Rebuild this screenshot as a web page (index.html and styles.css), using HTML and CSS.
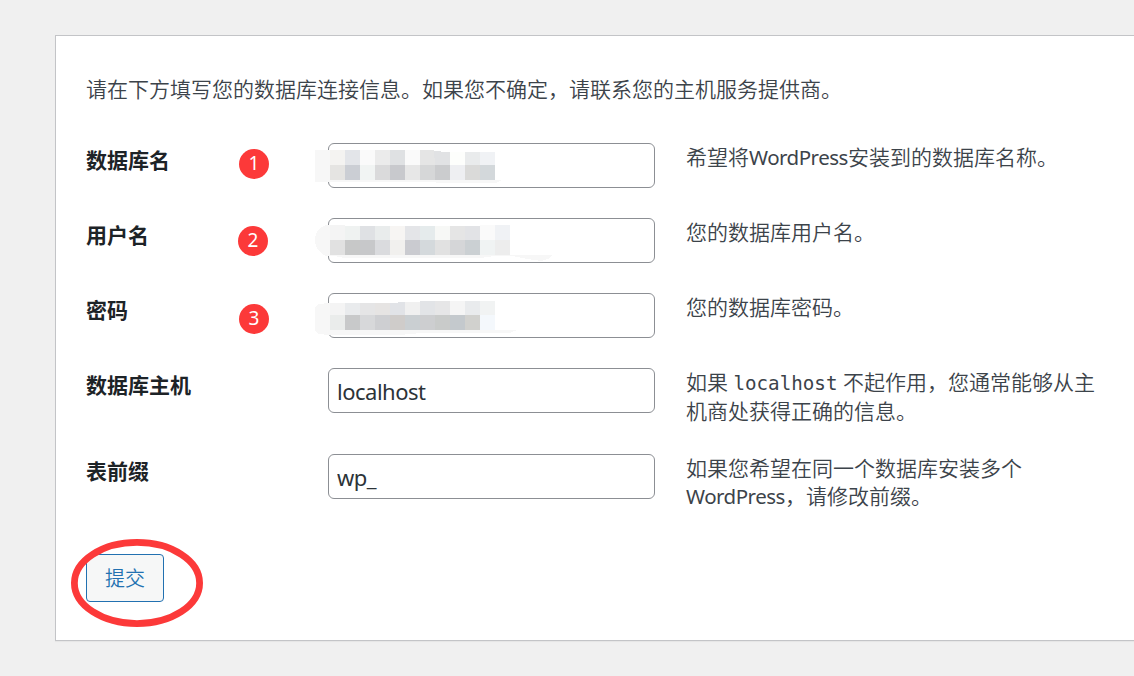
FILE: index.html
```html
<!DOCTYPE html>
<html lang="zh-CN">
<head>
<meta charset="utf-8">
<title>WordPress</title>
<link rel="stylesheet" href="styles.css">
</head>
<body>
<main class="card">
  <p class="intro">请在下方填写您的数据库连接信息。如果您不确定，请联系您的主机服务提供商。</p>
  <form class="form">
    <div class="row">
      <label class="label" for="dbname">数据库名</label>
      <span class="badge badge-1">1</span>
      <div class="field">
        <input class="input" id="dbname" type="text">
        <svg class="mosaic" width="240" height="36" viewBox="0 0 240 36" shape-rendering="crispEdges">
          <path fill="#f7f7f7" d="M0 0H15V30H187L181 33H125L116 32H0Z"/>
          <path fill="#f4f3f1" d="M15 0h15v15h-15z"/><path fill="#e3e5e9" d="M30 0h15v15h-15z"/><path fill="#fafafa" d="M45 0h15v15h-15z"/><path fill="#ebebeb" d="M60 0h15v15h-15z"/><path fill="#dfe1e3" d="M75 0h15v15h-15z"/><path fill="#fafafa" d="M90 0h15v15h-15z"/><path fill="#e5e5e5" d="M105 0h14v1h1v14h-15z"/><path fill="#e1e2e4" d="M119 1h7v1h9v13h-15z"/><path fill="#fdfefc" d="M135 2h15v13h-15z"/><path fill="#e9ebec" d="M150 2h15v13h-15z"/><path fill="#f0f2f5" d="M165 2h14l1 1v12h-15z"/>
          <path fill="#e5e4e2" d="M15 15h15v15h-15z"/><path fill="#cbced4" d="M30 15h15v15h-15z"/><path fill="#f1f4f3" d="M45 15h15v15h-15z"/><path fill="#dadadb" d="M60 15h15v15h-15z"/><path fill="#c8c9cd" d="M75 15h15v15h-15z"/><path fill="#e7e7e7" d="M90 15h15v15h-15z"/><path fill="#d6d7d8" d="M105 15h15v15h-15z"/><path fill="#cbccce" d="M120 15h15v15h-15z"/><path fill="#eeeff2" d="M135 15h15v15h-15z"/><path fill="#dadad9" d="M150 15h15v15h-15z"/><path fill="#d3d8db" d="M165 15h15v15h-15z"/>
        </svg>
      </div>
      <p class="desc">希望将<span class="latin">WordPress</span>安装到的数据库名称。</p>
    </div>
    <div class="row">
      <label class="label" for="uname">用户名</label>
      <span class="badge badge-2">2</span>
      <div class="field">
        <input class="input" id="uname" type="text">
        <svg class="mosaic" width="240" height="36" viewBox="0 0 240 36" shape-rendering="crispEdges">
          <path fill="#f7f7f7" d="M11 0H30V30H238L233 34L226 36L212 34L198 31H180L165 33H29L20 31H11Q0 26 0 15T11 0Z"/>
          <path fill="#f4f4f4" d="M15 0h15v15h-15z"/><path fill="#eff2f1" d="M30 1h15v14h-15z"/><path fill="#dfe1e4" d="M45 1h15v14h-15z"/><path fill="#e9ecec" d="M60 1h15v14h-15z"/><path fill="#f7f5f3" d="M75 1h15v14h-15z"/><path fill="#e4e5e8" d="M90 1h15v14h-15z"/><path fill="#e5ebec" d="M105 1h15v14h-15z"/><path fill="#f7f8f6" d="M120 1h15v14h-15z"/><path fill="#e5e5e5" d="M135 1h15v14h-15z"/><path fill="#e2e3e6" d="M150 1h15v14h-15z"/><path fill="#fafafa" d="M165 0h15v15h-15z"/><path fill="#f0f2f5" d="M180 0h15v15h-15z"/>
          <path fill="#e1e1e1" d="M15 15h15v15h-15z"/><path fill="#c7c8c8" d="M30 15h15v15h-15z"/><path fill="#c7c8ca" d="M45 15h15v15h-15z"/><path fill="#dadbde" d="M60 15h15v15h-15z"/><path fill="#f1f0ee" d="M75 15h15v15h-15z"/><path fill="#cacbd0" d="M90 15h15v15h-15z"/><path fill="#d4d9dc" d="M105 15h15v15h-15z"/><path fill="#e1e1e1" d="M120 15h15v15h-15z"/><path fill="#d5d6d8" d="M135 15h15v15h-15z"/><path fill="#cbd0d3" d="M150 15h15v15h-15z"/><path fill="#f0f3f3" d="M165 15h15v15h-15z"/><path fill="#ededed" d="M180 15h15v15h-15z"/>
        </svg>
      </div>
      <p class="desc">您的数据库用户名。</p>
    </div>
    <div class="row">
      <label class="label" for="pwd">密码</label>
      <span class="badge badge-3">3</span>
      <div class="field">
        <input class="input" id="pwd" type="text">
        <svg class="mosaic" width="240" height="36" viewBox="0 0 240 36" shape-rendering="crispEdges">
          <path fill="#f7f7f7" d="M3 4L15 3V30H202L195 33H106L84 35H15L3 34L0 31V7Z"/>
          <path fill="#f4f4f4" d="M15 3h15v12h-15z"/><path fill="#e9ebed" d="M30 3h15v12h-15z"/><path fill="#e5e5e6" d="M45 3h15v12h-15z"/><path fill="#e6e4e3" d="M60 3h15v12h-15z"/><path fill="#e1e3e7" d="M75 3h8v-1h7v13h-15z"/><path fill="#f0f0f0" d="M90 2h15v13h-15z"/><path fill="#e2e4e7" d="M105 1h15v14h-15z"/><path fill="#e6e6e7" d="M120 1h15v14h-15z"/><path fill="#f5f5f5" d="M135 1h15v14h-15z"/><path fill="#e9ebed" d="M150 1h15v14h-15z"/><path fill="#f1f3f3" d="M165 1h15v14h-15z"/>
          <path fill="#eaeceb" d="M15 15h15v15h-15z"/><path fill="#c8c9ca" d="M30 15h15v15h-15z"/><path fill="#d7d8da" d="M45 15h15v15h-15z"/><path fill="#cecfd2" d="M60 15h15v15h-15z"/><path fill="#cfccca" d="M75 15h15v15h-15z"/><path fill="#cacfd2" d="M90 15h15v15h-15z"/><path fill="#cdced0" d="M105 15h15v15h-15z"/><path fill="#c9cbca" d="M120 15h15v15h-15z"/><path fill="#c4c9cd" d="M135 15h15v15h-15z"/><path fill="#d1d1ce" d="M150 15h15v15h-15z"/><path fill="#f4f8fc" d="M165 15h15v15h-15z"/>
        </svg>
      </div>
      <p class="desc">您的数据库密码。</p>
    </div>
    <div class="row row-tall">
      <label class="label" for="dbhost">数据库主机</label>
      <div class="field"><input class="input" id="dbhost" type="text" value="localhost"></div>
      <p class="desc">如果 <code class="code">localhost</code> 不起作用，您通常能够从主机商处获得正确的信息。</p>
    </div>
    <div class="row row-last">
      <label class="label" for="prefix">表前缀</label>
      <div class="field"><input class="input" id="prefix" type="text" value="wp_"></div>
      <p class="desc">如果您希望在同一个数据库安装多个 <span class="latin">WordPress</span>，请修改前缀。</p>
    </div>
    <div class="actions">
      <button class="submit" type="button">提交</button>
      <svg class="ring" width="134" height="90" viewBox="0 0 134 90"><ellipse cx="67" cy="45" rx="62.6" ry="40.6" fill="none" stroke="#fc3939" stroke-width="6.8"/></svg>
    </div>
  </form>
</main>
</body>
</html>
```
FILE: styles.css
```css
* { box-sizing: border-box; }

body {
  margin: 0;
  padding: 35px 0 0 55px;
  height: 676px;
  overflow: hidden;
  background: #f0f0f0;
  color: #3c434a;
  font: 350 21px/28px "Noto Sans", "Noto Sans CJK SC", sans-serif;
}

.card {
  height: 606px;
  padding: 39px 0 0 30px;
  background: #fff;
  border: 1px solid #c3c4c7;
  border-right: 0;
  box-shadow: 0 1px 1px rgba(0, 0, 0, .04);
}

.intro { margin: 0 0 40px; }

.row {
  position: relative;
  display: grid;
  grid-template-columns: 242px 327px 446px;
  height: 75px;
  align-items: start;
}

.row-tall { height: 86px; }
.row-last { height: 100px; }

.label {
  padding-top: 3px;
  color: #1d2327;
  font-weight: 700;
}

.field { position: relative; grid-column: 2; }

.input {
  display: block;
  width: 327px;
  height: 45px;
  padding: 1px 8px 0;
  background: #fff;
  border: 1px solid #8c8f94;
  border-radius: 6px;
  color: #2c3338;
  font: 400 22px/30px "Noto Sans", "Noto Sans CJK SC", sans-serif;
  letter-spacing: -.5px;
}

.mosaic {
  position: absolute;
  left: -13px;
  top: 7px;
}

.desc {
  grid-column: 3;
  margin: 0;
  padding: 0 0 0 31px;
  line-height: 28.4px;
}

.row-tall .desc { line-height: 28.6px; }

.latin {
  font-size: 20.5px;
  font-weight: 400;
  letter-spacing: -.5px;
}

.code { font: 400 19.2px/1 "DejaVu Sans Mono", monospace; }

.badge {
  position: absolute;
  left: 153px;
  top: 6px;
  width: 30px;
  height: 30px;
  border-radius: 50%;
  background: #fc3939;
  color: #fff;
  font-size: 19px;
  font-weight: 400;
  line-height: 29px;
  text-align: center;
}

.badge-2 { left: 152px; top: 8px; }
.badge-3 { top: 11px; }

.actions { position: relative; display: flex; }

.submit {
  width: 78px;
  height: 48px;
  padding: 0;
  background: #f6f7f7;
  border: 1px solid #2271b1;
  border-radius: 4px;
  color: #2271b1;
  font: 350 20px/46px "Noto Sans CJK SC", sans-serif;
}

.ring {
  position: absolute;
  left: -16px;
  top: -15.6px;
}
```
